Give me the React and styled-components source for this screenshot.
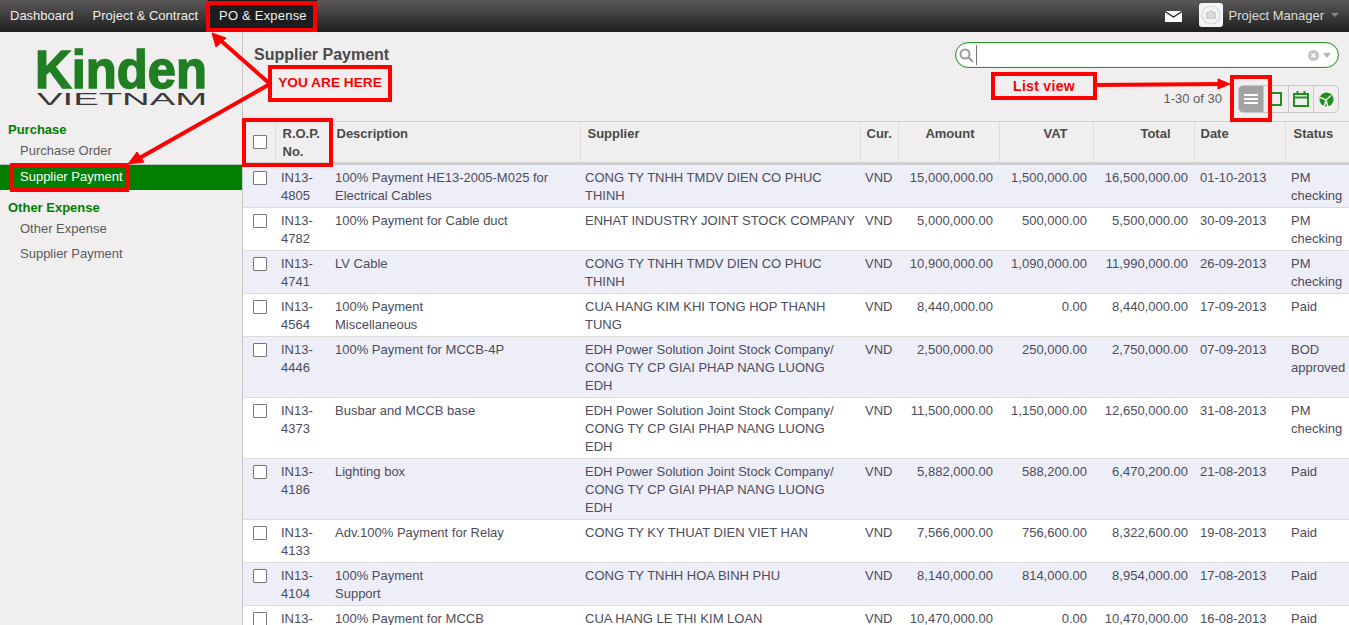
import React from 'react'
import styled, { createGlobalStyle } from 'styled-components'

const GlobalStyle = createGlobalStyle`
  html, body {
    margin: 0;
    padding: 0;
    height: 100%;
    overflow: hidden;
    background: #f0eeee;
  }
  body {
    font-family: 'Liberation Sans', Arial, sans-serif;
    font-size: 13px;
    color: #4c4c4c;
  }
`
const Page = styled.div`
  position: relative;
  width: 1349px;
  height: 625px;
  display: flex;
  flex-direction: column;
  overflow: hidden;
`
const TopBar = styled.div`
  flex: 0 0 32px;
  display: flex;
  align-items: center;
  padding-left: 0.5px;
  background: linear-gradient(#5b5858, #1f1f1f);
`
const TopItem = styled.a`
  height: 32px;
  line-height: 31px;
  padding: 0 ${p => (p.$active ? '10px 0 11.5px' : '9.5px')};
  font-size: 13px;
  letter-spacing: ${p => (p.$active ? '0.2px' : '0')};
  color: #eeeeee;
  background: ${p => (p.$active ? '#1d1d1f' : 'transparent')};
`
const TopRight = styled.div`
  margin-left: auto;
  display: flex;
  align-items: center;
  padding: 0 10px 2px 0;
`
const MailIcon = styled.svg`
  margin-top: 2px;
`
const Avatar = styled.div`
  width: 24px;
  height: 24px;
  margin: 0 6px 0 17px;
  border-radius: 3px;
  background: #f4f4f4;
  display: flex;
  align-items: center;
  justify-content: center;
`
const UserName = styled.span`
  font-size: 13px;
  color: #dddddd;
`
const Caret = styled.span`
  width: 0;
  height: 0;
  margin-left: ${p => p.$gap || 7}px;
  border-left: 4px solid transparent;
  border-right: 4px solid transparent;
  border-top: ${p => (p.$big ? 5 : 4)}px solid ${p => p.$color || '#888888'};
`
const Body = styled.div`
  flex: 1;
  display: flex;
  min-height: 0;
`
const Sidebar = styled.div`
  flex: 0 0 242px;
  border-right: 1px solid #c9c9c9;
`
const LogoBox = styled.div`
  height: 76px;
  padding: 13px 0 0 34px;
`
const SideHeading = styled.div`
  margin-top: ${p => p.$gap || 0}px;
  padding-left: 8px;
  font-size: 13px;
  font-weight: bold;
  line-height: 18px;
  color: #008000;
`
const SideLink = styled.div`
  height: 25px;
  line-height: 23px;
  padding-left: 20px;
  font-size: 13px;
  color: ${p => (p.$active ? '#ffffff' : '#5f5a60')};
  background: ${p => (p.$active ? '#008000' : 'transparent')};
  border-top: ${p => (p.$active ? '1px solid #bdbdbd' : 'none')};
`
const Main = styled.div`
  flex: 1;
  min-width: 0;
  display: flex;
  flex-direction: column;
`
const MainHead = styled.div`
  flex: 0 0 90px;
  display: flex;
  justify-content: space-between;
  padding: 10px 10px 0 11px;
  box-sizing: border-box;
  border-bottom: 1px solid #d2d2d2;
`
const Title = styled.h1`
  margin: 4px 0 0;
  font-size: 16px;
  line-height: 18px;
  font-weight: bold;
  color: #4a4a4a;
`
const HeadRight = styled.div`
  display: flex;
  flex-direction: column;
  align-items: flex-end;
`
const SearchBox = styled.div`
  width: 384px;
  height: 26px;
  box-sizing: border-box;
  display: flex;
  align-items: center;
  padding: 0 7px 0 3px;
  background: #ffffff;
  border: 1px solid #2f932f;
  box-shadow: inset 0 0 1px #2f932f;
  border-radius: 13px;
`
const SearchInput = styled.div`
  flex: 1;
  height: 20px;
  margin-left: 2px;
  border-left: 1px solid #777777;
`
const Pager = styled.div`
  display: flex;
  align-items: center;
  margin-top: 17px;
`
const PagerText = styled.span`
  margin: 0 16px 1px 0;
  font-size: 13px;
  color: #5c5c5c;
`
const ViewGroup = styled.div`
  display: flex;
  height: 26px;
  border: 1px solid #c8c8c8;
  border-radius: 5px;
  overflow: hidden;
`
const ViewButton = styled.div`
  width: 24px;
  display: flex;
  align-items: center;
  justify-content: center;
  background: ${p => (p.$active ? '#a3a3a3' : 'transparent')};
  border-left: ${p => (p.$first ? 'none' : '1px solid #c8c8c8')};
`
const TableWrap = styled.div`
  flex: 1;
  min-height: 0;
  overflow: hidden;
`
const Table = styled.table`
  width: 1106px;
  table-layout: fixed;
  border-collapse: collapse;
  font-size: 13px;
`
const Th = styled.th`
  height: 41px;
  padding: 3px ${p => p.$right || 6}px 0 ${p => p.$left || 6}px;
  vertical-align: top;
  box-sizing: border-box;
  text-align: ${p => (p.$right ? 'right' : 'left')};
  font-size: 13px;
  line-height: 18px;
  font-weight: bold;
  color: #4a4a4a;
  background: #f0eeee;
  border-right: 1px solid #dedede;
  border-bottom: 3px solid #cfcfcf;
`
const Td = styled.td`
  padding: 4px 6px 2px ${p => p.$left || 6}px;
  vertical-align: top;
  text-align: ${p => (p.$num ? 'right' : 'left')};
  font-size: 13px;
  line-height: 18px;
  color: #4c4c5c;
`
const Tr = styled.tr`
  background: ${p => (p.$odd ? '#eeeef8' : '#ffffff')};
  border-bottom: 1px solid #dcdcdc;
`
const Line = styled.div`
  white-space: nowrap;
`
const Check = styled.span`
  display: block;
  width: 12px;
  height: 12px;
  margin: ${p => (p.$head ? 10 : 2)}px 0 0 4px;
  background: #ffffff;
  border: 1px solid #767676;
  border-radius: 1px;
`
const Overlay = styled.div`
  position: absolute;
  inset: 0;
  pointer-events: none;
`
const RedBox = styled.div`
  position: absolute;
  left: ${p => p.$x}px;
  top: ${p => p.$y}px;
  width: ${p => p.$w}px;
  height: ${p => p.$h}px;
  box-sizing: border-box;
  border: 4px solid #ff0000;
  display: flex;
  align-items: center;
  justify-content: center;
  padding-bottom: ${p => (p.$tight ? 2 : 0)}px;
  font-size: ${p => (p.$tight ? 13.7 : 14)}px;
  font-weight: bold;
  letter-spacing: ${p => (p.$tight ? 0 : 0.3)}px;
  color: #ff0000;
  background: ${p => (p.$fill ? '#f0eeee' : 'transparent')};
`
const Arrows = styled.svg`
  position: absolute;
  left: 0;
  top: 0;
`

const rows = [
  ['IN13-4805', ['100% Payment HE13-2005-M025 for', 'Electrical Cables'], ['CONG TY TNHH TMDV DIEN CO PHUC', 'THINH'], '15,000,000.00', '1,500,000.00', '16,500,000.00', '01-10-2013', 'PM checking'],
  ['IN13-4782', ['100% Payment for Cable duct'], ['ENHAT INDUSTRY JOINT STOCK COMPANY'], '5,000,000.00', '500,000.00', '5,500,000.00', '30-09-2013', 'PM checking'],
  ['IN13-4741', ['LV Cable'], ['CONG TY TNHH TMDV DIEN CO PHUC', 'THINH'], '10,900,000.00', '1,090,000.00', '11,990,000.00', '26-09-2013', 'PM checking'],
  ['IN13-4564', ['100% Payment', 'Miscellaneous'], ['CUA HANG KIM KHI TONG HOP THANH', 'TUNG'], '8,440,000.00', '0.00', '8,440,000.00', '17-09-2013', 'Paid'],
  ['IN13-4446', ['100% Payment for MCCB-4P'], ['EDH Power Solution Joint Stock Company/', 'CONG TY CP GIAI PHAP NANG LUONG', 'EDH'], '2,500,000.00', '250,000.00', '2,750,000.00', '07-09-2013', 'BOD approved'],
  ['IN13-4373', ['Busbar and MCCB base'], ['EDH Power Solution Joint Stock Company/', 'CONG TY CP GIAI PHAP NANG LUONG', 'EDH'], '11,500,000.00', '1,150,000.00', '12,650,000.00', '31-08-2013', 'PM checking'],
  ['IN13-4186', ['Lighting box'], ['EDH Power Solution Joint Stock Company/', 'CONG TY CP GIAI PHAP NANG LUONG', 'EDH'], '5,882,000.00', '588,200.00', '6,470,200.00', '21-08-2013', 'Paid'],
  ['IN13-4133', ['Adv.100% Payment for Relay'], ['CONG TY KY THUAT DIEN VIET HAN'], '7,566,000.00', '756,600.00', '8,322,600.00', '19-08-2013', 'Paid'],
  ['IN13-4104', ['100% Payment', 'Support'], ['CONG TY TNHH HOA BINH PHU'], '8,140,000.00', '814,000.00', '8,954,000.00', '17-08-2013', 'Paid'],
  ['IN13-4098', ['100% Payment for MCCB'], ['CUA HANG LE THI KIM LOAN'], '10,470,000.00', '0.00', '10,470,000.00', '16-08-2013', 'Paid'],
]

const Lines = ({ items }) => items.map((t, i) => <Line key={i}>{t}</Line>)

const Logo = () => (
  <svg width="176" height="62" viewBox="0 0 176 62">
    <text x="1" y="43" fontFamily="'Liberation Sans', sans-serif" fontWeight="bold" fontSize="54" fill="#1f7f22" stroke="#1f7f22" strokeWidth="1.5" textLength="172" lengthAdjust="spacingAndGlyphs">Kinden</text>
    <text x="3" y="60" fontFamily="'Liberation Sans', sans-serif" fontSize="17" fill="#3a3a3a" textLength="170" lengthAdjust="spacingAndGlyphs">VIETNAM</text>
  </svg>
)

const App = () => {
  return (
    <Page>
      <GlobalStyle />
      <TopBar>
        <TopItem>Dashboard</TopItem>
        <TopItem>Project &amp; Contract</TopItem>
        <TopItem $active>PO &amp; Expense</TopItem>
        <TopRight>
          <MailIcon width="17" height="11" viewBox="0 0 17 11">
            <rect width="17" height="11" fill="#ffffff" />
            <path d="M0 0.5 L8.5 6 L17 0.5" fill="none" stroke="#222" strokeWidth="1.3" />
          </MailIcon>
          <Avatar>
            <svg width="20" height="20" viewBox="0 0 20 20" fill="none" stroke="#d6d6d6">
              <circle cx="10" cy="10" r="9" strokeWidth="1.2" />
              <path d="M5 7 H8 L9 5.5 H12 L13 7 H15 V14 H5Z" fill="#cfcfcf" stroke="none" />
              <circle cx="10" cy="10.5" r="2" stroke="#f4f4f4" />
            </svg>
          </Avatar>
          <UserName>Project Manager</UserName>
          <Caret />
        </TopRight>
      </TopBar>
      <Body>
        <Sidebar>
          <LogoBox><Logo /></LogoBox>
          <SideHeading>Purchase</SideHeading>
          <SideLink>Purchase Order</SideLink>
          <SideLink $active>Supplier Payment</SideLink>
          <SideHeading $gap={9}>Other Expense</SideHeading>
          <SideLink>Other Expense</SideLink>
          <SideLink>Supplier Payment</SideLink>
        </Sidebar>
        <Main>
          <MainHead>
            <Title>Supplier Payment</Title>
            <HeadRight>
              <SearchBox>
                <svg width="15" height="15" viewBox="0 0 15 15" fill="none" stroke="#9a9a9a" strokeWidth="2">
                  <circle cx="6" cy="6" r="4.5" />
                  <path d="M9.5 9.5 L14 14" />
                </svg>
                <SearchInput />
                <svg width="11" height="11" viewBox="0 0 11 11">
                  <circle cx="5.5" cy="5.5" r="5.5" fill="#c4c4c4" />
                  <path d="M3.5 3.5 L7.5 7.5 M7.5 3.5 L3.5 7.5" stroke="#fff" strokeWidth="1.5" />
                </svg>
                <Caret $big $gap={4} $color="#b4b4b4" />
              </SearchBox>
              <Pager>
                <PagerText>1-30 of 30</PagerText>
                <ViewGroup>
                  <ViewButton $active $first>
                    <svg width="14" height="10" viewBox="0 0 14 10" fill="#ffffff">
                      <rect y="0" width="14" height="2" />
                      <rect y="4" width="14" height="2" />
                      <rect y="8" width="14" height="2" />
                    </svg>
                  </ViewButton>
                  <ViewButton>
                    <svg width="14" height="16" viewBox="0 0 14 16" fill="none" stroke="#1f8f1f" strokeWidth="2">
                      <rect x="2" y="2" width="10" height="12" />
                    </svg>
                  </ViewButton>
                  <ViewButton>
                    <svg width="16" height="16" viewBox="0 0 16 16" fill="none" stroke="#1f8f1f" strokeWidth="2">
                      <rect x="1" y="3" width="14" height="12" />
                      <path d="M1 6.5 H15" />
                      <path d="M4.5 0 V3 M11.5 0 V3" />
                    </svg>
                  </ViewButton>
                  <ViewButton>
                    <svg width="15" height="15" viewBox="0 0 15 15">
                      <circle cx="7.5" cy="7.5" r="7" fill="#1f8f1f" />
                      <path d="M1 5.5 L7 8 L12 3.5 M7 8 L5 15 M7 8 L9 15" fill="none" stroke="#f0eeee" strokeWidth="1.5" />
                    </svg>
                  </ViewButton>
                </ViewGroup>
              </Pager>
            </HeadRight>
          </MainHead>
          <TableWrap>
            <Table>
              <colgroup>
                <col width="32" /><col width="55" /><col width="250" /><col width="280" /><col width="38" />
                <col width="101" /><col width="94" /><col width="101" /><col width="91" /><col width="64" />
              </colgroup>
              <thead>
                <tr>
                  <Th><Check $head /></Th>
                  <Th $left={7}>R.O.P. No.</Th>
                  <Th>Description</Th>
                  <Th $left={7}>Supplier</Th>
                  <Th>Cur.</Th>
                  <Th $right={24}>Amount</Th>
                  <Th $right={25}>VAT</Th>
                  <Th $right={23}>Total</Th>
                  <Th>Date</Th>
                  <Th $left={8}>Status</Th>
                </tr>
              </thead>
              <tbody>
                {rows.map((r, i) => (
                  <Tr key={r[0]} $odd={i % 2 === 0}>
                    <Td><Check /></Td>
                    <Td>{r[0]}</Td>
                    <Td $left={5}><Lines items={r[1]} /></Td>
                    <Td $left={5}><Lines items={r[2]} /></Td>
                    <Td $left={5}>VND</Td>
                    <Td $num>{r[3]}</Td>
                    <Td $num>{r[4]}</Td>
                    <Td $num>{r[5]}</Td>
                    <Td>{r[6]}</Td>
                    <Td>{r[7]}</Td>
                  </Tr>
                ))}
              </tbody>
            </Table>
          </TableWrap>
        </Main>
      </Body>
      <Overlay>
        <Arrows width="1349" height="625" fill="#ff0000" stroke="#ff0000">
          <path d="M270 84 L219 39" strokeWidth="4" />
          <path d="M212 33 L226 38 L216 47Z" />
          <path d="M270 84 L136 160" strokeWidth="4" />
          <path d="M128 164 L137 152 L144 162Z" />
          <path d="M1095 85 L1222 84" strokeWidth="4" />
          <path d="M1230 84 L1218 79 L1218 89Z" />
        </Arrows>
        <RedBox $x={206} $y={1} $w={111} $h={31} />
        <RedBox $x={268} $y={65} $w={124} $h={37} $fill $tight>YOU ARE HERE</RedBox>
        <RedBox $x={242} $y={118} $w={91} $h={49} />
        <RedBox $x={10} $y={163} $w={119} $h={29} />
        <RedBox $x={991} $y={72} $w={106} $h={28} $fill>List view</RedBox>
        <RedBox $x={1230} $y={75} $w={42} $h={47} />
      </Overlay>
    </Page>
  )
}

export default App
